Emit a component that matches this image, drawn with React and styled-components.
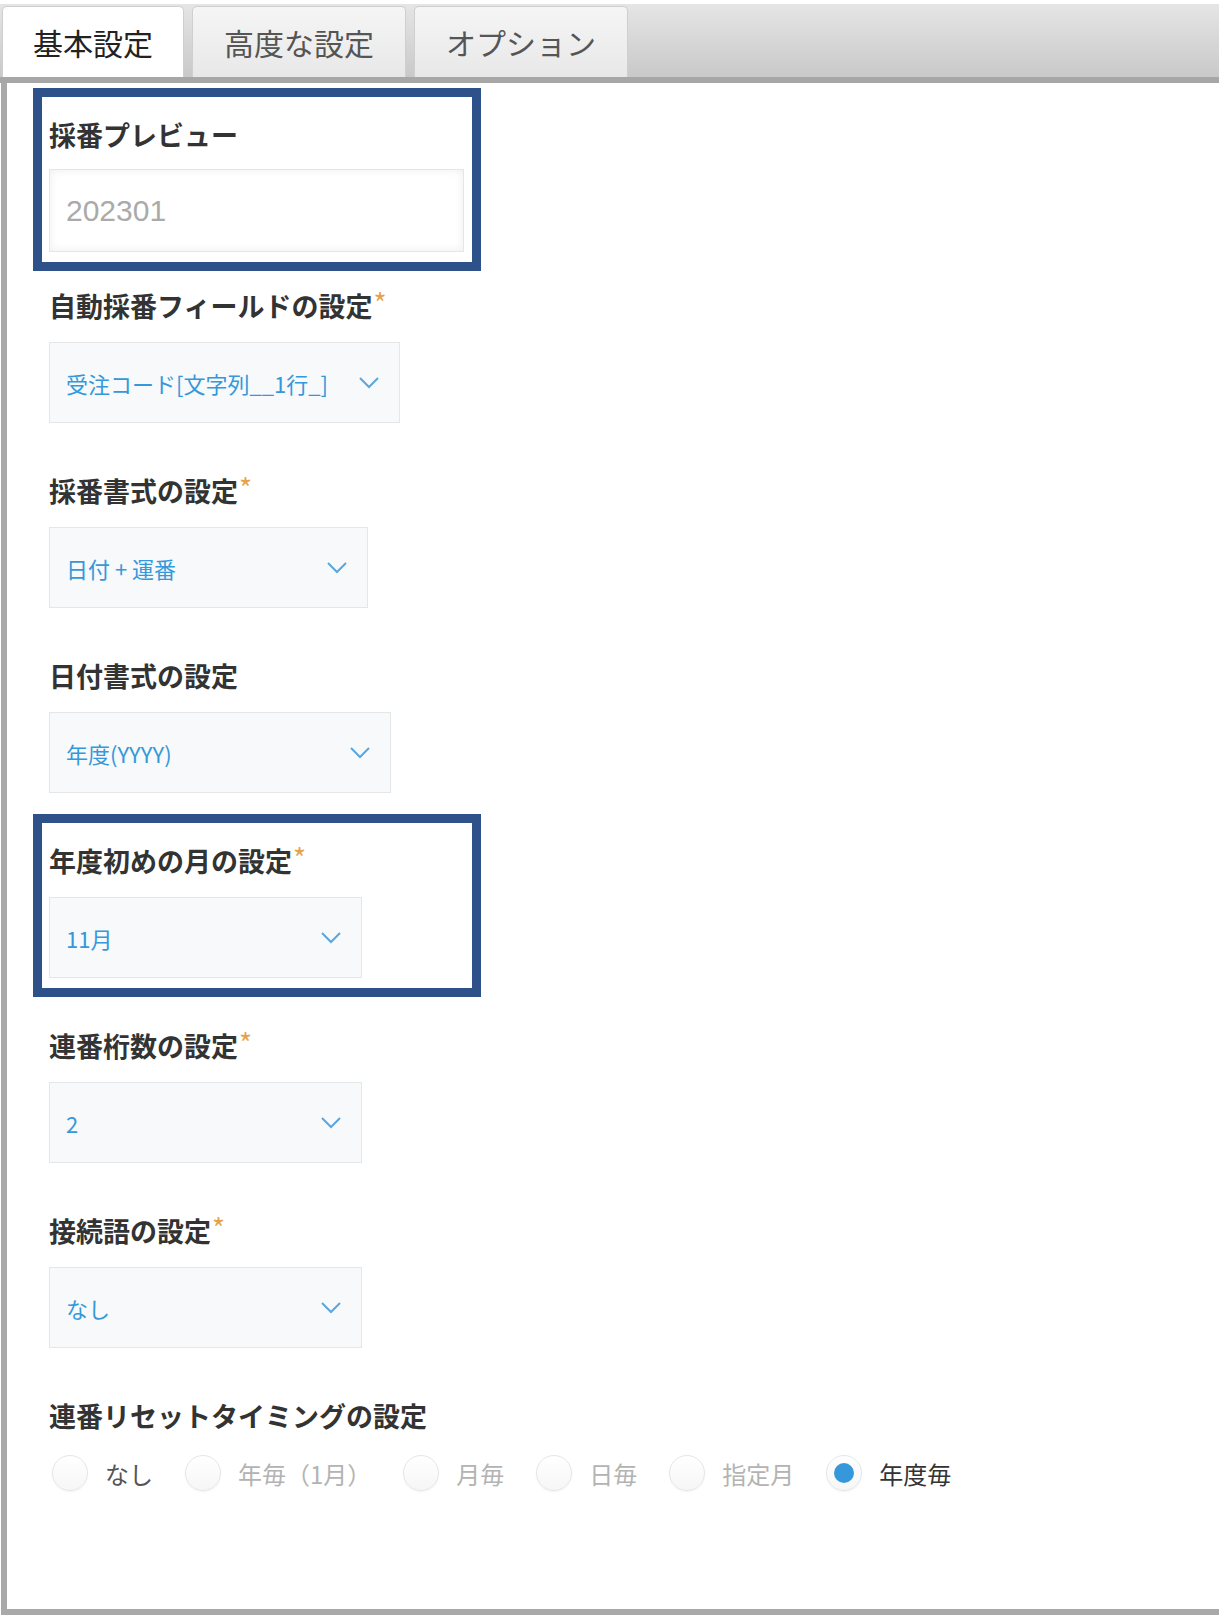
import styled, { createGlobalStyle } from "styled-components";

const GlobalStyle = createGlobalStyle`
  body {
    margin: 0;
    background: #fff;
    font-family: "Noto Sans CJK JP", "Noto Sans", sans-serif;
  }
`;

const Page = styled.div`
  width: 1219px;
  height: 1618px;
  padding-top: 4px;
  box-sizing: border-box;
  overflow: hidden;
`;

const TabStrip = styled.div`
  display: flex;
  align-items: flex-end;
  gap: 8px;
  height: 73px;
  padding-left: 2px;
  background: linear-gradient(#e5e5e5, #c9c9c9);
  border-bottom: 6px solid #a7a7a7;
`;

const Tab = styled.div`
  display: flex;
  align-items: center;
  height: 71px;
  padding: 0 ${(p) => (p.$active ? 30 : 31)}px;
  box-sizing: border-box;
  border: 1px solid #cfcfcf;
  border-bottom: none;
  border-radius: 5px 5px 0 0;
  background: ${(p) => (p.$active ? "#fff" : "linear-gradient(#f5f5f5, #e8e8e8)")};
  color: ${(p) => (p.$active ? "#222" : "#555")};
  font-size: 30px;
  white-space: nowrap;
`;

const Panel = styled.div`
  margin-left: 1px;
  height: 1532px;
  box-sizing: border-box;
  padding-top: 14px;
  border-left: 6px solid #a9a9a9;
  border-bottom: 6px solid #a9a9a9;
  display: flex;
  flex-direction: column;
`;

const Field = styled.div`
  margin-left: 35px;
  margin-top: ${(p) => p.$top}px;
  width: ${(p) => (p.$wide ? 1000 : 430)}px;
  box-sizing: border-box;
  padding: 20px 7px 10px;
  outline: ${(p) => (p.$mark ? "9px solid #2f518a" : "none")};
`;

const Label = styled.div`
  font-size: 27px;
  line-height: 36px;
  font-weight: 700;
  color: #333;
  white-space: nowrap;
`;

const Req = styled.span`
  color: #e6a24a;
  font-size: 28px;
  line-height: 28px;
  font-weight: 400;
  vertical-align: top;
  margin-left: 1px;
`;

const Preview = styled.div`
  margin-top: 16px;
  width: 415px;
  height: 83px;
  box-sizing: border-box;
  display: flex;
  align-items: center;
  padding-left: 16px;
  border: 1px solid #e3e7e8;
  background: #fff;
  box-shadow: inset 0 0 10px rgba(0, 0, 0, 0.07);
  color: #aaa;
  font-family: "Liberation Sans", "Noto Sans CJK JP", sans-serif;
  font-size: 30px;
`;

const Select = styled.div`
  margin-top: 18px;
  width: ${(p) => p.$w}px;
  height: 81px;
  box-sizing: border-box;
  display: flex;
  align-items: center;
  justify-content: space-between;
  padding: 0 20px 0 16px;
  border: 1px solid #e3e7e8;
  background: #f7f9fa;
  color: #3498db;
  font-size: 22px;
  white-space: nowrap;
`;

const Chevron = () => (
  <svg width="20" height="12" viewBox="0 0 20 12">
    <polyline points="1,1 10,10 19,1" fill="none" stroke="#5aa7e0" strokeWidth="2" />
  </svg>
);

const RadioRow = styled.div`
  display: flex;
  align-items: center;
  margin-top: 21px;
  margin-left: 3px;
`;

const RadioItem = styled.div`
  display: flex;
  align-items: center;
  gap: 17px;
  margin-right: 32px;
  font-size: 24px;
  white-space: nowrap;
  color: ${(p) => p.$color};
`;

const RadioDot = styled.span`
  width: 36px;
  height: 36px;
  box-sizing: border-box;
  border-radius: 50%;
  border: 1px solid #e3e7e8;
  background: linear-gradient(#fff, #f6f6f6);
  box-shadow: 0 1px 2px rgba(0, 0, 0, 0.05);
  display: flex;
  align-items: center;
  justify-content: center;
  flex-shrink: 0;

  &::after {
    content: "";
    width: 20px;
    height: 20px;
    border-radius: 50%;
    background: #3498db;
    display: ${(p) => (p.$on ? "block" : "none")};
  }
`;

const selects = [
  { label: "自動採番フィールドの設定", req: true, value: "受注コード[文字列__1行_]", w: 351 },
  { label: "採番書式の設定", req: true, value: "日付 + 運番", w: 319 },
  { label: "日付書式の設定", req: false, value: "年度(YYYY)", w: 342 },
  { label: "年度初めの月の設定", req: true, value: "11月", w: 313, mark: true },
  { label: "連番桁数の設定", req: true, value: "2", w: 313 },
  { label: "接続語の設定", req: true, value: "なし", w: 313 },
];

const radios = [
  { text: "なし", color: "#555" },
  { text: "年毎（1月）", color: "#b3b3b3" },
  { text: "月毎", color: "#b3b3b3" },
  { text: "日毎", color: "#b3b3b3" },
  { text: "指定月", color: "#b3b3b3" },
  { text: "年度毎", color: "#333", on: true },
];

const App = () => {
  return (
    <Page>
      <GlobalStyle />
      <TabStrip>
        <Tab $active>基本設定</Tab>
        <Tab>高度な設定</Tab>
        <Tab>オプション</Tab>
      </TabStrip>

      <Panel>
        <Field $mark $top={0}>
          <Label>採番プレビュー</Label>
          <Preview>202301</Preview>
        </Field>

        {selects.map((s, i) => (
          <Field key={s.label} $mark={s.mark} $top={i === 0 ? 6 : 20}>
            <Label>
              {s.label}
              {s.req && <Req>*</Req>}
            </Label>
            <Select $w={s.w}>
              <span>{s.value}</span>
              <Chevron />
            </Select>
          </Field>
        ))}

        <Field $top={20} $wide>
          <Label>連番リセットタイミングの設定</Label>
          <RadioRow>
            {radios.map((r) => (
              <RadioItem key={r.text} $color={r.color}>
                <RadioDot $on={r.on} />
                {r.text}
              </RadioItem>
            ))}
          </RadioRow>
        </Field>
      </Panel>
    </Page>
  );
};

export default App;
